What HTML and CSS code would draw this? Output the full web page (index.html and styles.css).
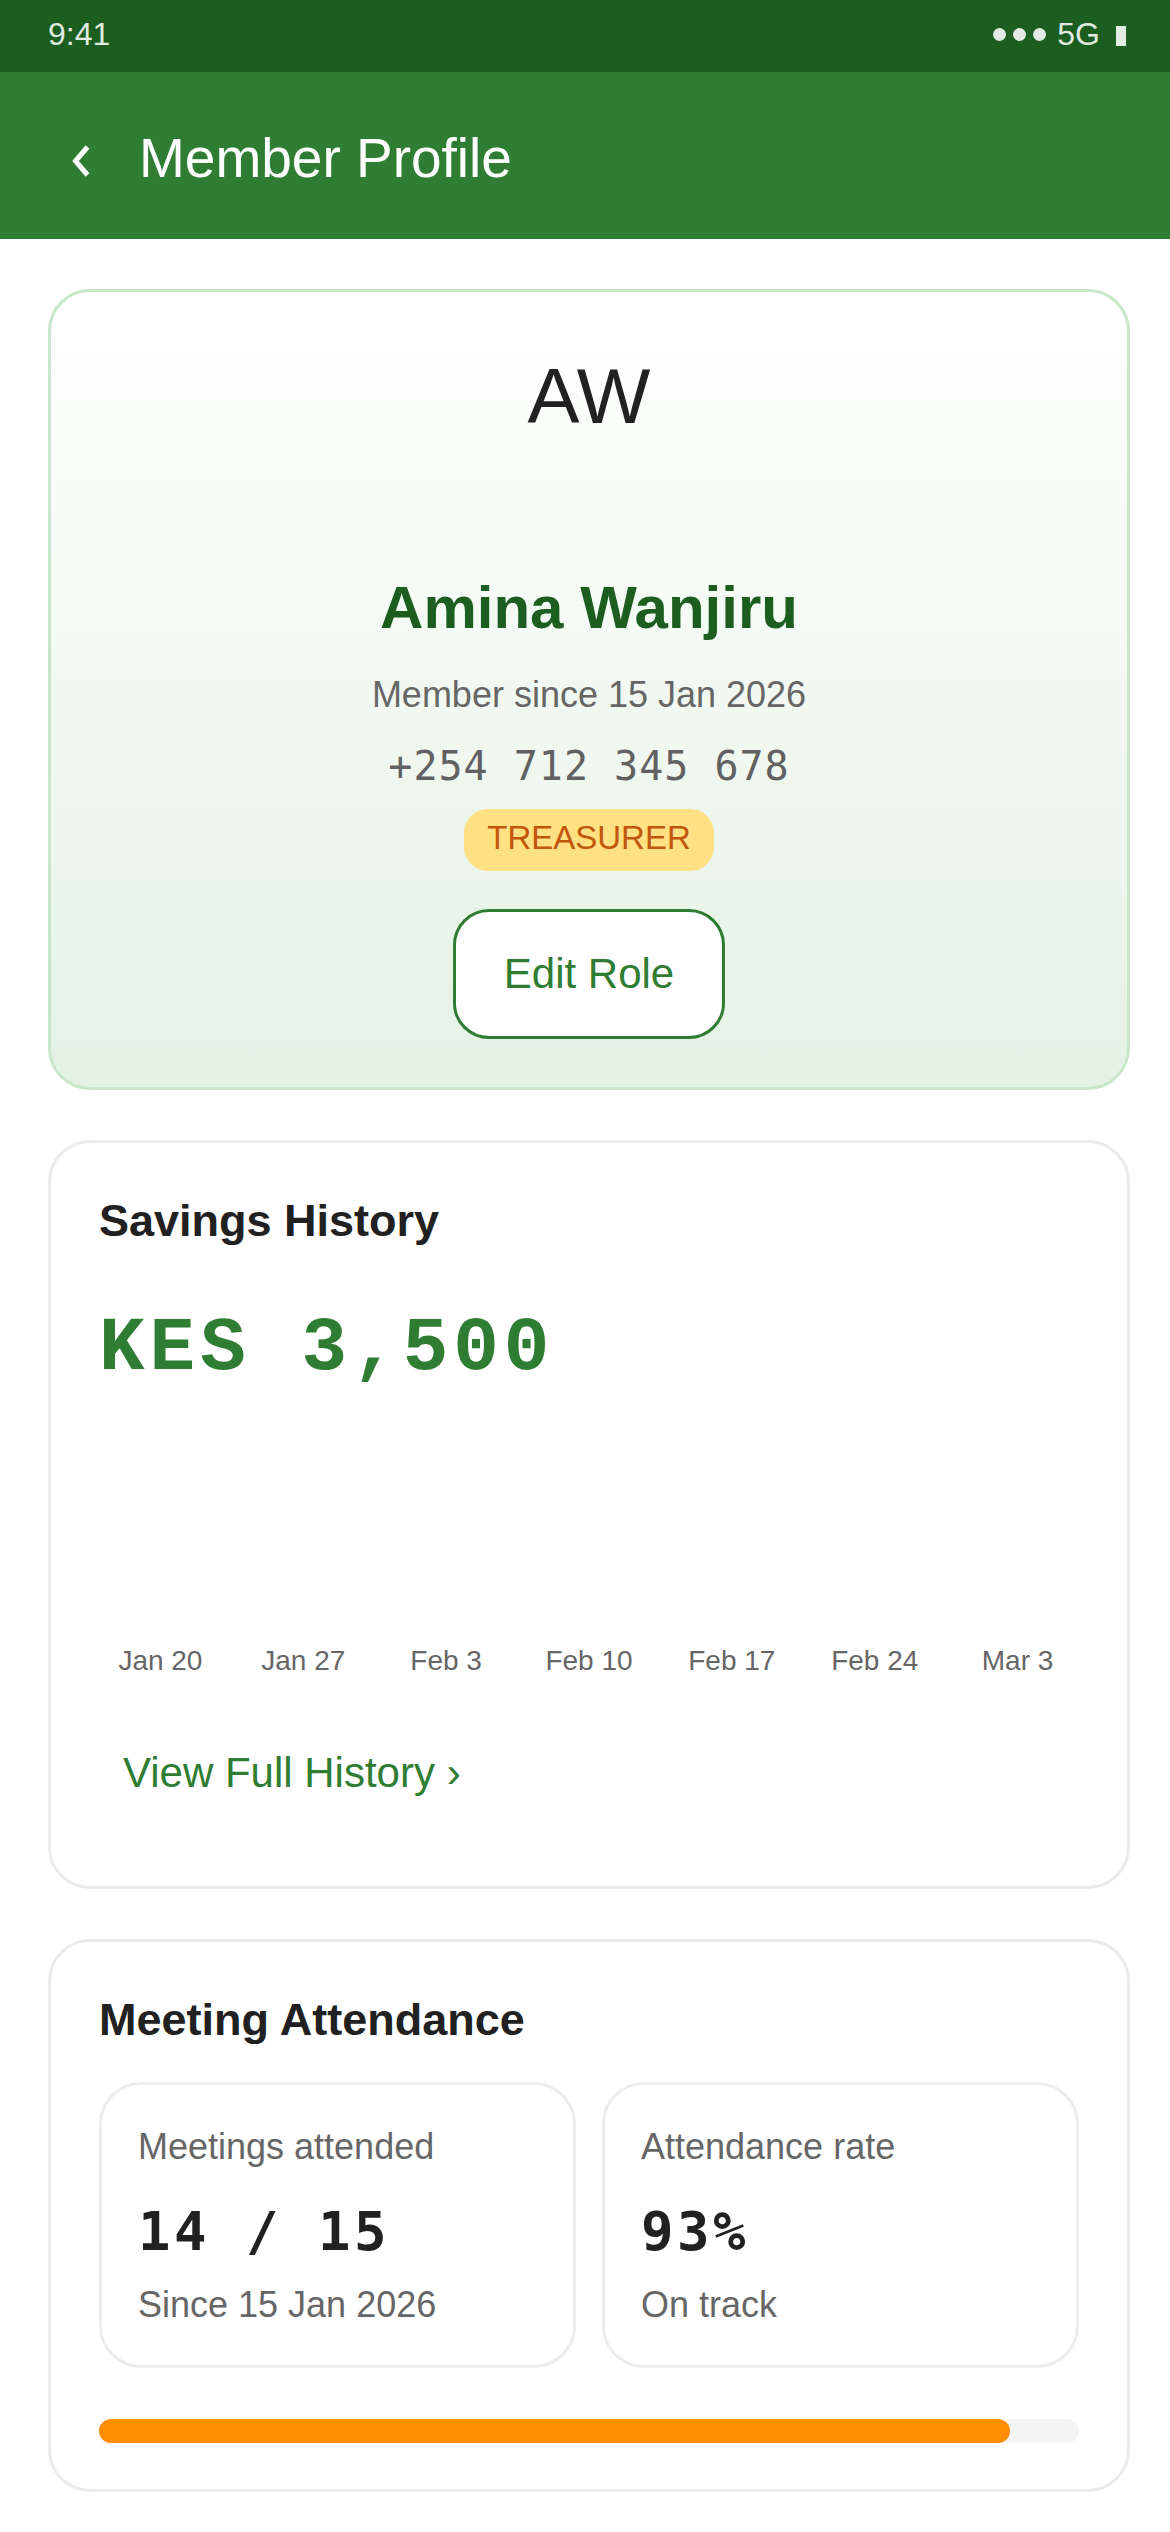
FILE: index.html
```html
<!DOCTYPE html>
<html lang="en">
<head>
    <meta charset="UTF-8">
    <meta name="viewport" content="width=device-width, initial-scale=1.0">
    <title>Member Profile</title>
    <link rel="stylesheet" href="styles.css">
</head>
<body>
    <div class="status-bar">
        <span class="time">9:41</span>
        <div class="status-icons">
            <span class="dot"></span><span class="dot"></span><span class="dot"></span>
            <span class="network">5G</span>
            <span class="battery"></span>
        </div>
    </div>
    <header class="app-header">
        <svg class="back" width="18" height="32" viewBox="0 0 18 32">
            <path d="M15.5 2 L3.5 16 L15.5 30" fill="none" stroke="#fff" stroke-width="5"/>
        </svg>
        <h1>Member Profile</h1>
    </header>
    <main>
        <section class="card profile-card">
            <div class="avatar">AW</div>
            <h2 class="member-name">Amina Wanjiru</h2>
            <p class="member-since">Member since 15 Jan 2026</p>
            <p class="phone">+254 712 345 678</p>
            <span class="role-badge">TREASURER</span>
            <div>
                <button class="edit-role">Edit Role</button>
            </div>
        </section>

        <section class="card">
            <h3>Savings History</h3>
            <div class="total">KES 3,500</div>
            <div class="chart">
                <div class="bars"></div>
                <div class="labels">
                    <span>Jan 20</span>
                    <span>Jan 27</span>
                    <span>Feb 3</span>
                    <span>Feb 10</span>
                    <span>Feb 17</span>
                    <span>Feb 24</span>
                    <span>Mar 3</span>
                </div>
            </div>
            <a href="#" class="link-btn">View Full History ›</a>
        </section>

        <section class="card attendance-card">
            <h3>Meeting Attendance</h3>
            <div class="stats">
                <div class="stat">
                    <p class="stat-label">Meetings attended</p>
                    <div class="stat-value">14 / 15</div>
                    <p class="stat-sub">Since 15 Jan 2026</p>
                </div>
                <div class="stat">
                    <p class="stat-label">Attendance rate</p>
                    <div class="stat-value">93%</div>
                    <p class="stat-sub">On track</p>
                </div>
            </div>
            <div class="progress">
                <div class="progress-fill" style="width: 93%"></div>
            </div>
        </section>
    </main>
</body>
</html>
```

FILE: styles.css
```css
body {
    font-family: 'Liberation Sans', Arial, sans-serif;
    margin: 0;
    padding: 0;
    background-color: #fff;
    color: #212121;
    overflow: hidden;
}
p, h1, h2, h3 {
    margin: 0;
}
.status-bar {
    height: 72px;
    box-sizing: border-box;
    background-color: #1b5e20;
    color: rgba(255, 255, 255, 0.88);
    display: flex;
    justify-content: space-between;
    align-items: center;
    padding: 0 44px 4px 48px;
    font-size: 32px;
}
.status-icons {
    display: flex;
    align-items: center;
}
.dot {
    width: 13px;
    height: 13px;
    border-radius: 50%;
    background-color: rgba(255, 255, 255, 0.88);
    margin-right: 7px;
}
.network {
    margin-left: 4px;
}
.battery {
    width: 10px;
    height: 20px;
    background-color: rgba(255, 255, 255, 0.88);
    margin-left: 16px;
    margin-top: 4px;
}
.app-header {
    height: 167px;
    box-sizing: border-box;
    background-color: #2e7d32;
    display: flex;
    align-items: center;
    padding: 5px 0 0 72px;
}
.back {
    margin-top: 6px;
}
.app-header h1 {
    color: #fff;
    font-size: 55px;
    font-weight: 400;
    margin-left: 49px;
}
main {
    padding: 50px 40px 0 48px;
}
.card {
    border: 3px solid #ebebeb;
    border-radius: 42px;
    padding: 48px;
    background-color: #fff;
    margin-bottom: 50px;
}
.card:last-child {
    margin-bottom: 0;
}
.profile-card {
    border-color: #c8e6c9;
    background: linear-gradient(180deg, #ffffff 0%, #e4f2e4 100%);
    text-align: center;
}
.avatar {
    height: 232px;
    box-sizing: border-box;
    padding-top: 17px;
    font-size: 78px;
    line-height: 78px;
    color: #212121;
}
.member-name {
    font-size: 60px;
    line-height: 72px;
    font-weight: 700;
    color: #1b5e20;
}
.member-since {
    margin-top: 29px;
    font-size: 36px;
    line-height: 43px;
    color: #666;
}
.phone {
    margin-top: 26px;
    font-family: 'DejaVu Sans Mono', monospace;
    font-size: 40px;
    line-height: 48px;
    letter-spacing: 1px;
    color: #616161;
}
.role-badge {
    display: inline-block;
    margin-top: 19px;
    padding: 10px 23px 14px;
    font-size: 33px;
    line-height: 38px;
    background-color: #ffe082;
    color: #c2560d;
    border-radius: 24px;
}
.edit-role {
    margin-top: 38px;
    height: 130px;
    padding: 0 48px;
    border: 3px solid #2e7d32;
    border-radius: 36px;
    background-color: #fff;
    color: #2e7d32;
    font-family: 'Liberation Sans', Arial, sans-serif;
    font-size: 42px;
    cursor: pointer;
}
.card h3 {
    font-size: 45px;
    line-height: 60px;
    font-weight: 700;
}
.total {
    margin-top: 53px;
    font-family: 'Liberation Mono', monospace;
    font-weight: 700;
    font-size: 76px;
    line-height: 91px;
    letter-spacing: 5px;
    color: #2e7d32;
}
.bars {
    height: 249px;
}
.labels {
    display: grid;
    grid-template-columns: repeat(7, 1fr);
    margin: 0 -10px;
    text-align: center;
    font-size: 28px;
    line-height: 34px;
    color: #666;
}
.link-btn {
    display: inline-flex;
    align-items: center;
    min-height: 130px;
    margin-top: 30px;
    padding: 0 24px;
    font-size: 42px;
    color: #2e7d32;
    text-decoration: none;
}
.attendance-card {
    padding-bottom: 46px;
}
.stats {
    display: grid;
    grid-template-columns: 1fr 1fr;
    gap: 26px;
    margin-top: 32px;
}
.stat {
    border: 3px solid #ececec;
    border-radius: 42px;
    padding: 40px 36px 39px;
}
.stat-label, .stat-sub {
    font-size: 36px;
    line-height: 43px;
    color: #666;
}
.stat-value {
    margin-top: 31px;
    font-family: 'DejaVu Sans Mono', monospace;
    font-weight: 700;
    font-size: 54px;
    line-height: 65px;
    letter-spacing: 3.5px;
    color: #212121;
}
.stat-sub {
    margin-top: 19px;
}
.progress {
    margin-top: 51px;
    height: 24px;
    border-radius: 12px;
    background-color: #f4f4f4;
}
.progress-fill {
    height: 100%;
    border-radius: 12px;
    background-color: #ff8f00;
}
```
